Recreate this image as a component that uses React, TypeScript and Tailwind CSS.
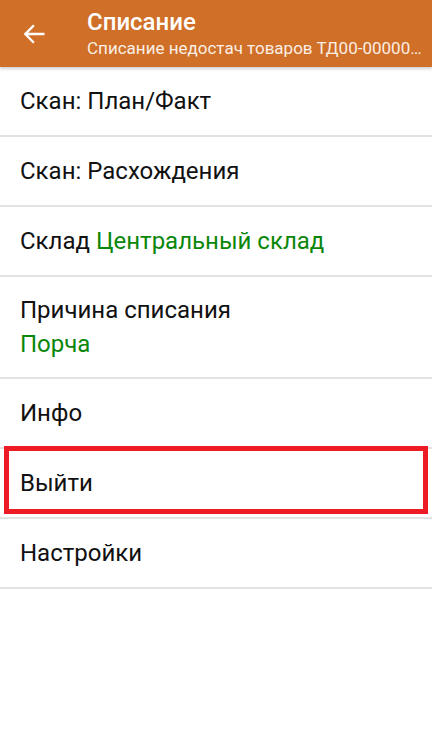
import React from 'react';

const Row = ({ children, highlight }: { children: React.ReactNode; highlight?: boolean }) => (
  <div className="relative border-b-2 border-[#e2e2e2]">
    <div className="flex h-[68px] items-center px-5 text-[24px] text-[#111]">{children}</div>
    {highlight && (
      <div className="pointer-events-none absolute left-[4px] right-[4px] top-[-3px] h-[68px] border-[5px] border-[#ed1c24]" />
    )}
  </div>
);

export default function App() {
  return (
    <div className="h-[739px] w-[432px] bg-white" style={{ fontFamily: 'Roboto, "Noto Sans", sans-serif' }}>
      {/* Toolbar */}
      <div className="relative z-10 flex h-[67px] items-center bg-[#cf6f28] shadow-[0_2px_3px_rgba(0,0,0,0.18)]">
        <div className="flex w-[87px] shrink-0 items-center pl-[20px]">
          <svg width="28" height="28" viewBox="0 0 24 24" fill="none">
            <path d="M20 12H4.8M11.2 5.2 4.6 12l6.6 6.8" stroke="#fff" strokeWidth="2" strokeLinecap="square" />
          </svg>
        </div>
        <div className="min-w-0 flex-1 pr-2">
          <div className="text-[24px] font-medium leading-[28px] text-white">Списание</div>
          <div className="whitespace-nowrap text-[17px] leading-[24px] text-[#fbeee4]">
            Списание недостач товаров ТД00-00000…
          </div>
        </div>
      </div>

      <Row>Скан: План/Факт</Row>
      <Row>Скан: Расхождения</Row>
      <Row>
        Склад&nbsp;<span className="text-[#0a870a]">Центральный склад</span>
      </Row>
      <div className="border-b-2 border-[#e2e2e2] px-5 py-[16px] text-[24px] leading-[34px] text-[#111]">
        <div>Причина списания</div>
        <div className="text-[#0a870a]">Порча</div>
      </div>
      <Row>Инфо</Row>
      <Row highlight>Выйти</Row>
      <Row>Настройки</Row>
    </div>
  );
}
